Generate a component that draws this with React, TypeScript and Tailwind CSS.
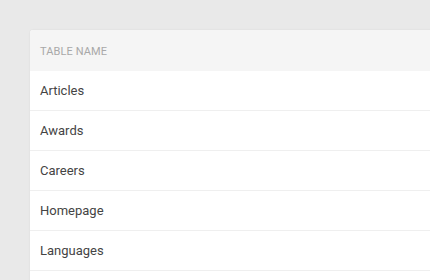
const tables = ["Articles", "Awards", "Careers", "Homepage", "Languages"];

export default function App() {
  return (
    <div
      className="h-[280px] w-[430px] overflow-hidden bg-[#e9e9e9] pl-[30px] pt-[30px]"
      style={{ fontFamily: "Roboto, 'Noto Sans', sans-serif" }}
    >
      <div className="h-[260px] w-[440px] overflow-hidden rounded-tl-[3px] bg-white shadow-[0_0_2px_rgba(0,0,0,0.08)]">
        <div className="flex h-[41px] items-center bg-[#f5f5f5] px-[10px] pt-[3px] text-[11px] uppercase tracking-[0.1px] text-[#a8a8a8]">
          Table name
        </div>
        {tables.map((name) => (
          <div
            key={name}
            className="flex h-10 items-center border-b border-[#efefef] px-[10px] text-[13px] text-[#444]"
          >
            {name}
          </div>
        ))}
      </div>
    </div>
  );
}
